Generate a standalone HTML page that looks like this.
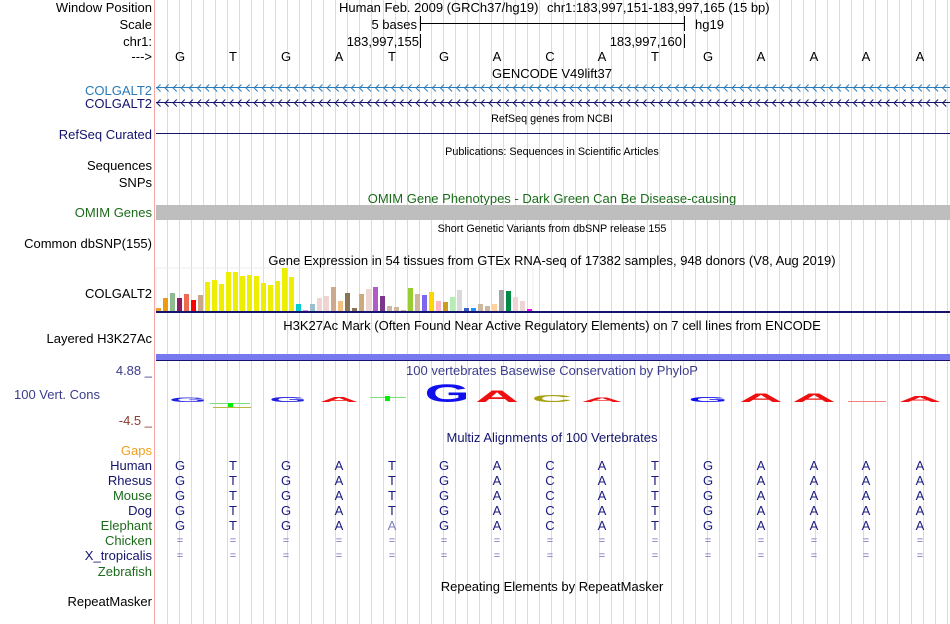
<!DOCTYPE html>
<html><head><meta charset="utf-8"><style>
html,body{margin:0;padding:0;background:#fff;width:950px;height:624px;overflow:hidden}
svg{display:block;font-family:"Liberation Sans",sans-serif}
</style></head><body>
<svg width="950" height="624" viewBox="0 0 950 624" xmlns="http://www.w3.org/2000/svg">
<defs>
<pattern id="grid" x="167" y="0" width="12" height="624" patternUnits="userSpaceOnUse">
<rect x="0" y="0" width="1" height="624" fill="#dcd6f2"/>
</pattern>
<pattern id="chev1" x="156" y="80" width="8.1" height="16" patternUnits="userSpaceOnUse">
<path d="M4.5,4.5 L1,8 L4.5,11.5" fill="none" stroke="#2a7ab8" stroke-width="1"/>
</pattern>
<pattern id="chev2" x="156" y="95" width="8.1" height="16" patternUnits="userSpaceOnUse">
<path d="M4.5,4.5 L1,8 L4.5,11.5" fill="none" stroke="#14146e" stroke-width="1"/>
</pattern>
</defs>
<rect x="156" y="0" width="794" height="624" fill="url(#grid)"/>
<rect x="154" y="0" width="1" height="624" fill="#f4a8a8"/>

<g font-size="13" fill="#000" text-anchor="end">
<text x="152" y="12">Window Position</text>
<text x="152" y="29">Scale</text>
<text x="152" y="46">chr1:</text>
<text x="152" y="61">---&gt;</text>
<text x="152" y="95" fill="#2a7ab8">COLGALT2</text>
<text x="152" y="108" fill="#14146e">COLGALT2</text>
<text x="152" y="139" fill="#14146e">RefSeq Curated</text>
<text x="152" y="170">Sequences</text>
<text x="152" y="187">SNPs</text>
<text x="152" y="217" fill="#1a6b1a">OMIM Genes</text>
<text x="152" y="248">Common dbSNP(155)</text>
<text x="152" y="298">COLGALT2</text>
<text x="152" y="343">Layered H3K27Ac</text>
<text x="152" y="375" fill="#3c3c8c">4.88 _</text>
<text x="100" y="399" fill="#3c3c8c">100 Vert. Cons</text>
<text x="152" y="425" fill="#8c3c2c">-4.5 _</text>
<text x="152" y="455" fill="#f0a020">Gaps</text>
<text x="152" y="470" fill="#14146e">Human</text>
<text x="152" y="485" fill="#14146e">Rhesus</text>
<text x="152" y="500" fill="#1a6b1a">Mouse</text>
<text x="152" y="515" fill="#14146e">Dog</text>
<text x="152" y="530" fill="#1a6b1a">Elephant</text>
<text x="152" y="545" fill="#1a6b1a">Chicken</text>
<text x="152" y="560" fill="#14146e">X_tropicalis</text>
<text x="152" y="576" fill="#1a6b1a">Zebrafish</text>
<text x="152" y="606">RepeatMasker</text>
</g>

<g font-size="13" fill="#000">
<text x="339" y="12">Human Feb. 2009 (GRCh37/hg19)</text>
<text x="547" y="12">chr1:183,997,151-183,997,165 (15 bp)</text>
<text x="417" y="29" text-anchor="end">5 bases</text>
<rect x="420" y="16" width="1" height="15"/>
<rect x="420" y="23" width="265" height="1"/>
<rect x="684" y="16" width="1" height="15"/>
<text x="695" y="29">hg19</text>
<text x="419" y="46" text-anchor="end">183,997,155</text>
<rect x="420" y="34" width="1" height="14"/>
<text x="682" y="46" text-anchor="end">183,997,160</text>
<rect x="684" y="34" width="1" height="14"/>
</g>
<g font-size="13" fill="#000" text-anchor="middle">
<text x="180" y="61">G</text><text x="233" y="61">T</text><text x="286" y="61">G</text><text x="339" y="61">A</text><text x="392" y="61">T</text><text x="444" y="61">G</text><text x="497" y="61">A</text><text x="550" y="61">C</text><text x="602" y="61">A</text><text x="655" y="61">T</text><text x="708" y="61">G</text><text x="761" y="61">A</text><text x="814" y="61">A</text><text x="866" y="61">A</text><text x="920" y="61">A</text>
<text x="552" y="78">GENCODE V49lift37</text>
</g>
<rect x="156" y="87" width="794" height="1" fill="#2a7ab8"/>
<rect x="156" y="80" width="794" height="16" fill="url(#chev1)"/>
<rect x="156" y="102" width="794" height="1" fill="#14146e"/>
<rect x="156" y="95" width="794" height="16" fill="url(#chev2)"/>
<g font-size="10.8" fill="#000" text-anchor="middle">
<text x="552" y="122">RefSeq genes from NCBI</text>
<text x="552" y="155">Publications: Sequences in Scientific Articles</text>
<text x="552" y="232">Short Genetic Variants from dbSNP release 155</text>
</g>
<rect x="156" y="133" width="794" height="1" fill="#14146e"/>
<text x="552" y="203" font-size="13" fill="#1a6b1a" text-anchor="middle">OMIM Gene Phenotypes - Dark Green Can Be Disease-causing</text>
<rect x="156" y="205" width="794" height="15" fill="#bebebe"/>

<text x="552" y="265" font-size="13" fill="#000" text-anchor="middle">Gene Expression in 54 tissues from GTEx RNA-seq of 17382 samples, 948 donors (V8, Aug 2019)</text>
<rect x="156" y="268" width="377" height="43" fill="none" stroke="#eeeeee" stroke-width="1"/>
<g id="bars">
<rect x="156" y="308" width="5" height="3" fill="#f0a030"/>
<rect x="163" y="298" width="5" height="13" fill="#f09a10"/>
<rect x="170" y="293" width="5" height="18" fill="#8fbc8f"/>
<rect x="177" y="298" width="5" height="13" fill="#8b1c62"/>
<rect x="184" y="294" width="5" height="17" fill="#ee6a50"/>
<rect x="191" y="300" width="5" height="11" fill="#ff0000"/>
<rect x="198" y="295" width="5" height="16" fill="#c8a888"/>
<rect x="205" y="282" width="5" height="29" fill="#eeee00"/>
<rect x="212" y="280" width="5" height="31" fill="#eeee00"/>
<rect x="219" y="284" width="5" height="27" fill="#eeee00"/>
<rect x="226" y="272" width="5" height="39" fill="#eeee00"/>
<rect x="233" y="272" width="5" height="39" fill="#eeee00"/>
<rect x="240" y="276" width="5" height="35" fill="#eeee00"/>
<rect x="247" y="275" width="5" height="36" fill="#eeee00"/>
<rect x="254" y="276" width="5" height="35" fill="#eeee00"/>
<rect x="261" y="283" width="5" height="28" fill="#eeee00"/>
<rect x="268" y="285" width="5" height="26" fill="#eeee00"/>
<rect x="275" y="281" width="5" height="30" fill="#eeee00"/>
<rect x="282" y="268" width="5" height="43" fill="#eeee00"/>
<rect x="289" y="277" width="5" height="34" fill="#eeee00"/>
<rect x="296" y="304" width="5" height="7" fill="#00cdcd"/>
<rect x="303" y="310" width="5" height="1" fill="#ee82ee"/>
<rect x="310" y="304" width="5" height="7" fill="#9ac0cd"/>
<rect x="317" y="298" width="5" height="13" fill="#eed5d2"/>
<rect x="324" y="296" width="5" height="15" fill="#eed5d2"/>
<rect x="331" y="287" width="5" height="24" fill="#cdaa8d"/>
<rect x="338" y="301" width="5" height="10" fill="#f4c080"/>
<rect x="345" y="293" width="5" height="18" fill="#8b7355"/>
<rect x="352" y="308" width="5" height="3" fill="#8b7355"/>
<rect x="359" y="294" width="5" height="17" fill="#cdaa7d"/>
<rect x="366" y="289" width="5" height="22" fill="#eed5d2"/>
<rect x="373" y="287" width="5" height="24" fill="#b05cc8"/>
<rect x="380" y="296" width="5" height="15" fill="#7a378b"/>
<rect x="387" y="306" width="5" height="5" fill="#cdb79e"/>
<rect x="394" y="307" width="5" height="4" fill="#cdb79e"/>
<rect x="401" y="310" width="5" height="1" fill="#cdb79e"/>
<rect x="408" y="288" width="5" height="23" fill="#9acd32"/>
<rect x="415" y="294" width="5" height="17" fill="#cdb79e"/>
<rect x="422" y="295" width="5" height="16" fill="#7b68ee"/>
<rect x="429" y="292" width="5" height="19" fill="#ffd700"/>
<rect x="436" y="301" width="5" height="10" fill="#ffb6c1"/>
<rect x="443" y="302" width="5" height="9" fill="#cd9b1d"/>
<rect x="450" y="297" width="5" height="14" fill="#b4eeb4"/>
<rect x="457" y="290" width="5" height="21" fill="#d9d9d9"/>
<rect x="464" y="308" width="5" height="3" fill="#3a5fcd"/>
<rect x="471" y="308" width="5" height="3" fill="#1e90ff"/>
<rect x="478" y="304" width="5" height="7" fill="#cdb79e"/>
<rect x="485" y="306" width="5" height="5" fill="#cdb79e"/>
<rect x="492" y="304" width="5" height="7" fill="#ffd39b"/>
<rect x="499" y="290" width="5" height="21" fill="#a6a6a6"/>
<rect x="506" y="291" width="5" height="20" fill="#008b45"/>
<rect x="513" y="297" width="5" height="14" fill="#eed5d2"/>
<rect x="520" y="301" width="5" height="10" fill="#eed5d2"/>
<rect x="527" y="309" width="5" height="2" fill="#ff00ff"/>
</g>
<rect x="156" y="311" width="794" height="2" fill="#14146e"/>

<text x="552" y="330" font-size="13" fill="#000" text-anchor="middle">H3K27Ac Mark (Often Found Near Active Regulatory Elements) on 7 cell lines from ENCODE</text>
<rect x="156" y="354" width="794" height="6" fill="#7878f0"/>
<rect x="156" y="360" width="794" height="1" fill="#14146e"/>

<text x="552" y="375" font-size="13" fill="#3c3c8c" text-anchor="middle">100 vertebrates Basewise Conservation by PhyloP</text>
<g font-weight="bold" font-size="20" text-anchor="middle">
<text transform="translate(188,402) scale(2.4,0.3)" fill="#2020e0">G</text>
<rect x="210" y="403" width="40" height="1" fill="#7ce07c"/>
<rect x="228" y="403" width="5" height="5" fill="#00ee00"/>
<rect x="213" y="407" width="38" height="1" fill="#b8b840"/>
<text transform="translate(288,402) scale(2.4,0.35)" fill="#2020e0">G</text>
<text transform="translate(339,402) scale(2.7,0.35)" fill="#ee1010">A</text>
<rect x="370" y="397" width="36" height="1" fill="#7ce07c"/>
<rect x="385" y="396" width="5" height="5" fill="#00ee00"/>
<text transform="translate(447,402) scale(2.9,1.27)" fill="#1010ee">G</text>
<text transform="translate(497,402) scale(3.0,0.85)" fill="#ee1010">A</text>
<text transform="translate(552,402) scale(2.8,0.5)" fill="#a8a010">C</text>
<text transform="translate(602,402) scale(2.9,0.3)" fill="#ee1010">A</text>
<text transform="translate(708,402) scale(2.5,0.35)" fill="#1010ee">G</text>
<text transform="translate(761,402) scale(3.0,0.6)" fill="#ee1010">A</text>
<text transform="translate(814,402) scale(3.0,0.6)" fill="#ee1010">A</text>
<rect x="848" y="401" width="38" height="1" fill="#f08080"/>
<text transform="translate(920,402) scale(3.0,0.4)" fill="#ee1010">A</text>
</g>

<text x="552" y="442" font-size="13" fill="#14146e" text-anchor="middle">Multiz Alignments of 100 Vertebrates</text>
<g font-size="13" fill="#1a1a80" text-anchor="middle">
<text y="470"><tspan x="180">G</tspan><tspan x="233">T</tspan><tspan x="286">G</tspan><tspan x="339">A</tspan><tspan x="392">T</tspan><tspan x="444">G</tspan><tspan x="497">A</tspan><tspan x="550">C</tspan><tspan x="602">A</tspan><tspan x="655">T</tspan><tspan x="708">G</tspan><tspan x="761">A</tspan><tspan x="814">A</tspan><tspan x="866">A</tspan><tspan x="920">A</tspan></text>
<text y="485"><tspan x="180">G</tspan><tspan x="233">T</tspan><tspan x="286">G</tspan><tspan x="339">A</tspan><tspan x="392">T</tspan><tspan x="444">G</tspan><tspan x="497">A</tspan><tspan x="550">C</tspan><tspan x="602">A</tspan><tspan x="655">T</tspan><tspan x="708">G</tspan><tspan x="761">A</tspan><tspan x="814">A</tspan><tspan x="866">A</tspan><tspan x="920">A</tspan></text>
<text y="500"><tspan x="180">G</tspan><tspan x="233">T</tspan><tspan x="286">G</tspan><tspan x="339">A</tspan><tspan x="392">T</tspan><tspan x="444">G</tspan><tspan x="497">A</tspan><tspan x="550">C</tspan><tspan x="602">A</tspan><tspan x="655">T</tspan><tspan x="708">G</tspan><tspan x="761">A</tspan><tspan x="814">A</tspan><tspan x="866">A</tspan><tspan x="920">A</tspan></text>
<text y="515"><tspan x="180">G</tspan><tspan x="233">T</tspan><tspan x="286">G</tspan><tspan x="339">A</tspan><tspan x="392">T</tspan><tspan x="444">G</tspan><tspan x="497">A</tspan><tspan x="550">C</tspan><tspan x="602">A</tspan><tspan x="655">T</tspan><tspan x="708">G</tspan><tspan x="761">A</tspan><tspan x="814">A</tspan><tspan x="866">A</tspan><tspan x="920">A</tspan></text>
<text y="530"><tspan x="180">G</tspan><tspan x="233">T</tspan><tspan x="286">G</tspan><tspan x="339">A</tspan><tspan x="392" fill="#8080c0">A</tspan><tspan x="444">G</tspan><tspan x="497">A</tspan><tspan x="550">C</tspan><tspan x="602">A</tspan><tspan x="655">T</tspan><tspan x="708">G</tspan><tspan x="761">A</tspan><tspan x="814">A</tspan><tspan x="866">A</tspan><tspan x="920">A</tspan></text>
</g>
<g font-size="11" fill="#7070b8" text-anchor="middle">
<text y="544"><tspan x="180">=</tspan><tspan x="233">=</tspan><tspan x="286">=</tspan><tspan x="339">=</tspan><tspan x="392">=</tspan><tspan x="444">=</tspan><tspan x="497">=</tspan><tspan x="550">=</tspan><tspan x="602">=</tspan><tspan x="655">=</tspan><tspan x="708">=</tspan><tspan x="761">=</tspan><tspan x="814">=</tspan><tspan x="866">=</tspan><tspan x="920">=</tspan></text>
<text y="559"><tspan x="180">=</tspan><tspan x="233">=</tspan><tspan x="286">=</tspan><tspan x="339">=</tspan><tspan x="392">=</tspan><tspan x="444">=</tspan><tspan x="497">=</tspan><tspan x="550">=</tspan><tspan x="602">=</tspan><tspan x="655">=</tspan><tspan x="708">=</tspan><tspan x="761">=</tspan><tspan x="814">=</tspan><tspan x="866">=</tspan><tspan x="920">=</tspan></text>
</g>
<text x="552" y="591" font-size="13" fill="#000" text-anchor="middle">Repeating Elements by RepeatMasker</text>
</svg>
</body></html>
